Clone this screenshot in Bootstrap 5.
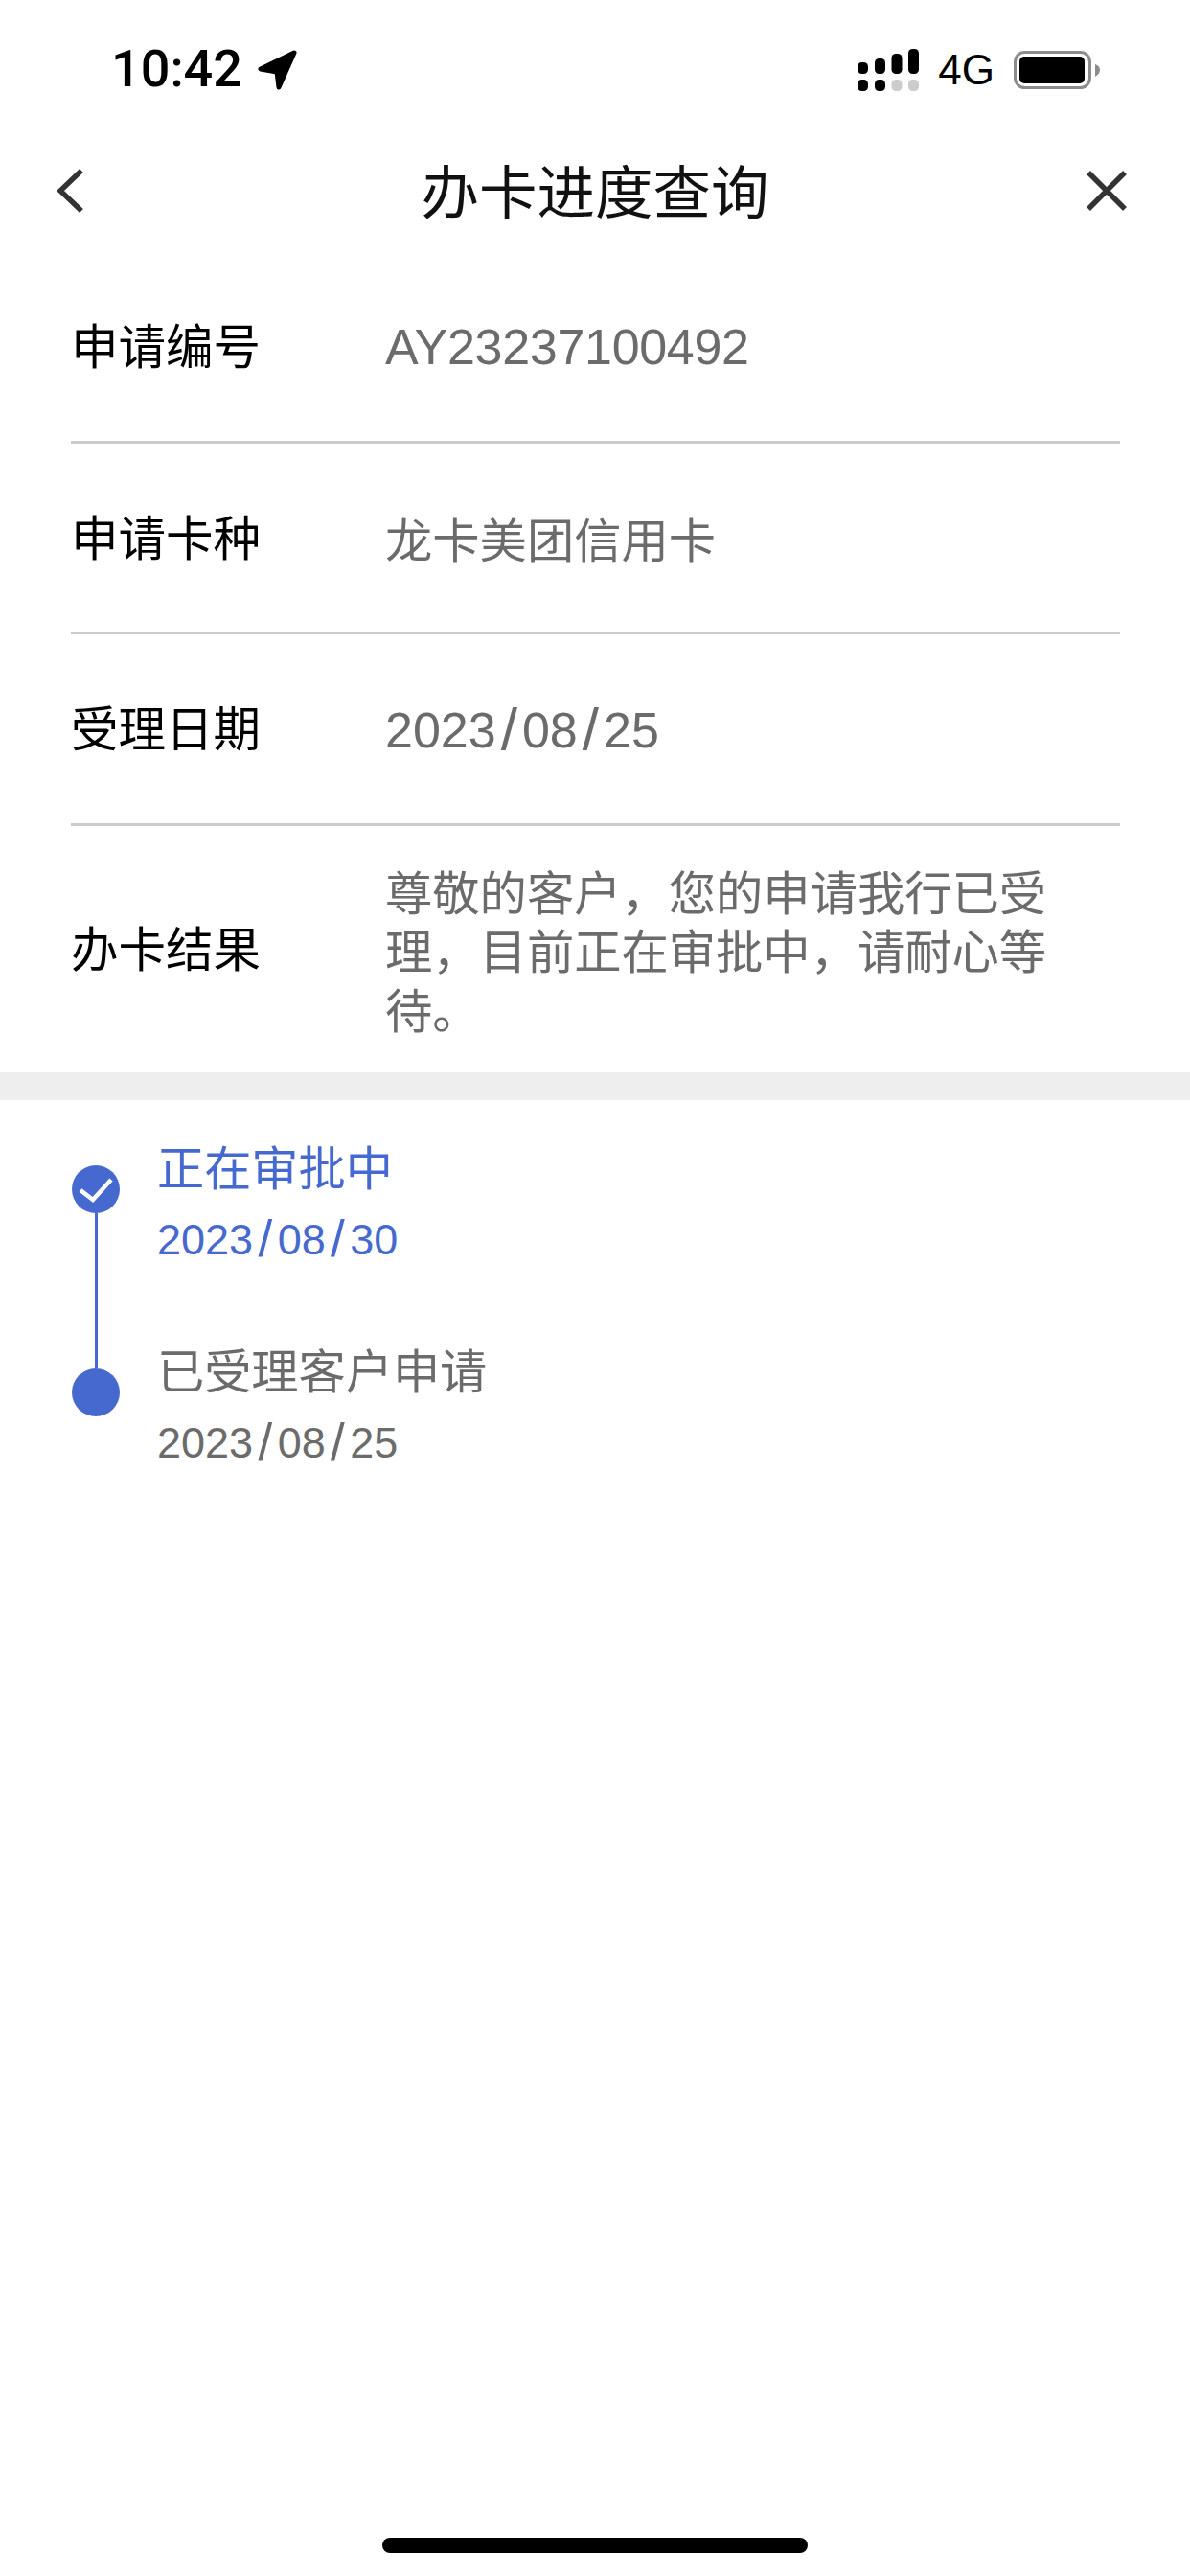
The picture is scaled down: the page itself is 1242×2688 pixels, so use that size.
<!DOCTYPE html>
<html lang="zh-CN">
<head>
  <meta charset="UTF-8" />
  <title>办卡进度查询</title>
  <meta name="viewport" content="width=device-width, initial-scale=1">
  <link href="https://cdn.jsdelivr.net/npm/bootstrap@5.3.0/dist/css/bootstrap.min.css" rel="stylesheet">
  <style>
    html, body { background: #fff; }
    body { width: 1242px; height: 2688px; overflow: hidden; font-family: "Liberation Sans", "Noto Sans CJK SC", sans-serif; color: #111; }
    .status-strip { height: 132px; padding: 14px 94px 0 116px; }
    .clock { font: 500 54px/1 Roboto, sans-serif; color: #000; margin-top: -2px; }
    .net-label { font: 400 44px/1 "Liberation Sans", sans-serif; color: #000; margin: 0 20px 0 20px; }
    .top-nav { height: 131px; padding: 0 58px; }
    .top-nav svg { margin-top: 3px; }
    .nav-side { flex: 1 1 0; }
    .nav-close { margin-right: 8px; }
    .top-nav h1 { font: 400 60.5px/1 "Noto Sans CJK SC", sans-serif; color: #111; margin: 0; }
    .info-list { margin: 0 73px 0 74px; }
    .info-row { height: 199.5px; border-bottom: 3px solid #ccc; }
    .info-row:last-child { height: 257px; border-bottom: 0; }
    .info-label { width: 328px; flex: none; font: 400 49.5px/1.25 "Noto Sans CJK SC", sans-serif; color: #000; margin-top: -4px; }
    .info-value { width: 700px; font: 400 49.3px/61.5px "Noto Sans CJK SC", sans-serif; color: #6b6b6b; }
    .latin-value { font: 400 52px/61.5px "Liberation Sans", sans-serif; letter-spacing: -0.3px; margin-top: 2px; }
    .latin-date { letter-spacing: 0; }
    .slash-big { font-size: 62px; line-height: 1; margin: 0 5px; vertical-align: -2px; }
    .gap-band { height: 29px; background: #eee; }
    .steps { padding: 68px 0 0 75px; }
    .step-item { height: 212px; gap: 39px; }
    .step-item:last-child { height: 100px; }
    .step-mark { width: 50px; flex: none; }
    .step-dot { width: 50px; height: 50px; background: #4669cf; border-radius: 50%; flex: none; }
    .step-line { width: 3px; flex: 1; background: #4669cf; }
    .step-text { margin-top: -25px; color: #6b6b6b; }
    .step-text.is-now { color: #4669cf; }
    .step-title { font: 400 49.2px/50px "Noto Sans CJK SC", sans-serif; }
    .step-date { font: 400 45px/50px "Liberation Sans", sans-serif; margin-top: 25px; }
    .step-date .slash-big { font-size: 53px; margin: 0 5.4px; vertical-align: -2px; }
    .home-bar { position: absolute; left: 399px; top: 2648px; width: 444px; height: 16px; background: #000; border-radius: 8px; }
  </style>
</head>
<body class="position-relative">

  <!-- Status bar -->
  <div class="status-strip d-flex align-items-center justify-content-between">
    <div class="d-flex align-items-center">
      <span class="clock">10:42</span>
      <svg class="ms-3" width="42" height="42" viewBox="0 0 42 42">
        <path d="M38 3 L3 20 L20 23 L22 39 Z" fill="#000" stroke="#000" stroke-width="5" stroke-linejoin="round"/>
      </svg>
    </div>
    <div class="d-flex align-items-center">
      <svg width="64" height="44" viewBox="0 0 64 44">
        <rect x="0" y="14" width="11" height="12" rx="4.5" fill="#000"/>
        <rect x="18" y="10" width="11" height="16" rx="4.5" fill="#000"/>
        <rect x="35.5" y="5" width="11" height="21" rx="4.5" fill="#000"/>
        <rect x="53" y="0" width="11" height="26" rx="4.5" fill="#000"/>
        <rect x="0" y="32" width="11" height="12" rx="4.5" fill="#000"/>
        <rect x="18" y="32" width="11" height="12" rx="4.5" fill="#000"/>
        <rect x="35.5" y="32" width="11" height="12" rx="4.5" fill="#ccc"/>
        <rect x="53" y="32" width="11" height="12" rx="4.5" fill="#ccc"/>
      </svg>
      <span class="net-label">4G</span>
      <svg width="90" height="40" viewBox="0 0 90 40">
        <rect x="1.5" y="1.5" width="78" height="37" rx="10" fill="none" stroke="#8c8c8c" stroke-width="3"/>
        <rect x="6" y="6" width="68" height="28" rx="5" fill="#000"/>
        <path d="M85 14 C88 15 90 17 90 20 C90 23 88 25 85 27 Z" fill="#8c8c8c"/>
      </svg>
    </div>
  </div>

  <!-- Nav bar -->
  <nav class="top-nav d-flex align-items-center">
    <div class="nav-side d-flex">
      <svg width="30" height="46" viewBox="0 0 30 46">
        <path d="M27 2 L5 23 L27 44" fill="none" stroke="#333" stroke-width="5.5"/>
      </svg>
    </div>
    <h1>办卡进度查询</h1>
    <div class="nav-side d-flex justify-content-end">
      <svg class="nav-close" width="42" height="42" viewBox="0 0 42 42">
        <path d="M2 2 L40 40 M40 2 L2 40" fill="none" stroke="#333" stroke-width="5.5"/>
      </svg>
    </div>
  </nav>

  <!-- Application info -->
  <div class="info-list">
    <div class="info-row d-flex align-items-center">
      <div class="info-label">申请编号</div>
      <div class="info-value latin-value">AY23237100492</div>
    </div>
    <div class="info-row d-flex align-items-center">
      <div class="info-label">申请卡种</div>
      <div class="info-value">龙卡美团信用卡</div>
    </div>
    <div class="info-row d-flex align-items-center">
      <div class="info-label">受理日期</div>
      <div class="info-value latin-value latin-date">2023<span class="slash-big">/</span>08<span class="slash-big">/</span>25</div>
    </div>
    <div class="info-row d-flex align-items-center">
      <div class="info-label">办卡结果</div>
      <div class="info-value">尊敬的客户，您的申请我行已受理，目前正在审批中，请耐心等待。</div>
    </div>
  </div>

  <div class="gap-band"></div>

  <!-- Progress timeline -->
  <div class="steps">
    <div class="step-item d-flex">
      <div class="step-mark d-flex flex-column align-items-center">
        <div class="step-dot d-flex align-items-center justify-content-center">
          <svg width="50" height="50" viewBox="0 0 50 50">
            <path d="M9 26 L22 36 L41 15" fill="none" stroke="#fff" stroke-width="4.5"/>
          </svg>
        </div>
        <div class="step-line"></div>
      </div>
      <div class="step-text is-now">
        <div class="step-title">正在审批中</div>
        <div class="step-date">2023<span class="slash-big">/</span>08<span class="slash-big">/</span>30</div>
      </div>
    </div>
    <div class="step-item d-flex">
      <div class="step-mark d-flex flex-column align-items-center">
        <div class="step-dot"></div>
      </div>
      <div class="step-text">
        <div class="step-title">已受理客户申请</div>
        <div class="step-date">2023<span class="slash-big">/</span>08<span class="slash-big">/</span>25</div>
      </div>
    </div>
  </div>

  <div class="home-bar"></div>

  <script src="https://cdn.jsdelivr.net/npm/bootstrap@5.3.0/dist/js/bootstrap.bundle.min.js"></script>
</body>
</html>
